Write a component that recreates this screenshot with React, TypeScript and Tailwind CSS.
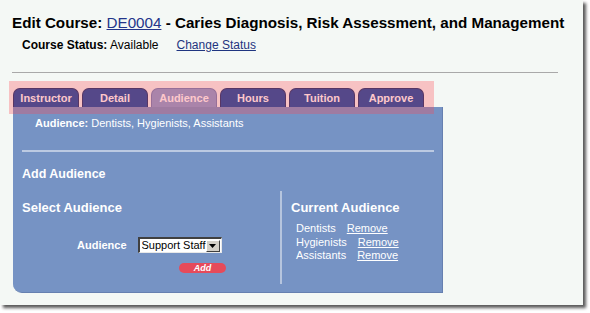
import React from "react";

const tabs = ["Instructor", "Detail", "Audience", "Hours", "Tuition", "Approve"];

function Tab({ label, active }: { label: string; active: boolean }) {
  return (
    <div
      className={
        "w-[66px] h-[19px] rounded-t-[7px] border border-b-0 flex items-center justify-center text-[11px] font-bold text-white leading-none " +
        (active ? "bg-[#86a0d2] border-[#6a82b8]" : "bg-[#0c4aa2] border-[#10306e]")
      }
    >
      {label}
    </div>
  );
}

export default function App() {
  return (
    <div className="w-[590px] h-[313px] bg-white font-['Liberation_Sans',Arial,sans-serif] overflow-hidden">
      <div className="w-[583px] h-[305px] bg-[#f4f8f5] shadow-[3px_3px_3px_rgba(0,0,0,0.65)] pl-[12px] pt-[13px] flex flex-col">
        <h1 className="text-[15.2px] leading-[20px] font-bold text-black whitespace-nowrap">
          Edit Course:{" "}
          <a className="font-normal text-[#23358a] underline">DE0004</a> - Caries Diagnosis, Risk Assessment, and Management
        </h1>
        <div className="ml-[10px] mt-[5px] text-[12px] leading-[14px] text-black whitespace-nowrap">
          <span className="font-bold">Course Status:</span> Available
          <a className="ml-[18px] text-[#1f3580] underline">Change Status</a>
        </div>
        <div className="mt-[20px] w-[546px] h-px bg-[#a9a9a9]" />
        <div className="relative ml-[1px] mt-[15px] w-[430px]">
          <div className="flex gap-[3px]">
            {tabs.map((t) => (
              <Tab key={t} label={t} active={t === "Audience"} />
            ))}
          </div>
          <div className="w-[430px] h-[186px] bg-[#7693c4] rounded-bl-[9px] border-r border-b border-[#6680b0] flex flex-col text-white">
            <div className="ml-[22px] mt-[9px] text-[11px] leading-[14px] whitespace-nowrap">
              <span className="font-bold">Audience:</span> Dentists, Hygienists, Assistants
            </div>
            <div className="ml-[9px] mt-[20px] w-[412px] h-[2px] bg-[#bccae2]" />
            <div className="ml-[9px] mt-[14px] text-[12.5px] leading-[16px] font-bold">Add Audience</div>
            <div className="mt-[9px] h-[93px] flex">
              <div className="w-[267px] pl-[9px] flex flex-col">
                <div className="mt-[9px] text-[13px] leading-[16px] font-bold">Select Audience</div>
                <div className="mt-[21px] ml-[55px] flex items-center h-[16px]">
                  <span className="text-[11px] font-bold leading-none">Audience</span>
                  <div className="ml-[11px] w-[84px] h-[16px] bg-white border-t-2 border-l-2 border-t-[#404040] border-l-[#404040] border-b border-r border-b-[#e8e8e8] border-r-[#e8e8e8] flex items-center">
                    <span className="text-black text-[11px] leading-none ml-[2px] flex-1 whitespace-nowrap overflow-hidden">Support Staff</span>
                    <div className="w-[14px] h-[12px] mr-[1px] bg-[#d4d0c8] border border-t-white border-l-white border-b-[#404040] border-r-[#404040] flex items-center justify-center shrink-0">
                      <svg width="7" height="4" viewBox="0 0 7 4">
                        <path d="M0 0h7L3.5 4z" fill="#000" />
                      </svg>
                    </div>
                  </div>
                </div>
                <div className="mt-[10px] ml-[157px] w-[47px] h-[10px] rounded-full bg-[#e64a5a] flex items-center justify-center">
                  <span className="text-[9px] leading-none font-bold italic text-white">Add</span>
                </div>
              </div>
              <div className="w-[2px] h-[93px] bg-[#b6c5de]" />
              <div className="pl-[9px] flex flex-col">
                <div className="mt-[9px] text-[13px] leading-[16px] font-bold whitespace-nowrap">Current Audience</div>
                <div className="ml-[5px] mt-[6px] text-[11px] leading-[13.5px] whitespace-nowrap">
                  <div>
                    Dentists<a className="ml-[11px] underline">Remove</a>
                  </div>
                  <div>
                    Hygienists<a className="ml-[11px] underline">Remove</a>
                  </div>
                  <div>
                    Assistants<a className="ml-[11px] underline">Remove</a>
                  </div>
                </div>
              </div>
            </div>
          </div>
          <div className="absolute left-[-4px] top-[-7px] w-[425px] h-[33px] bg-[rgba(255,70,80,0.3)] pointer-events-none" />
        </div>
      </div>
    </div>
  );
}
